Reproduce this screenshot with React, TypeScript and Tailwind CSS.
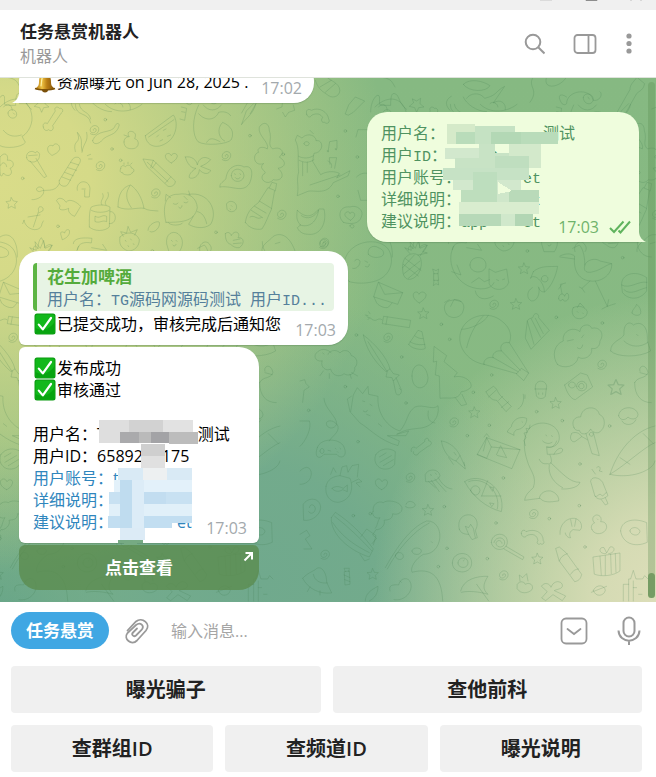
import React from 'react';

interface BubbleProps {
  className?: string;
  children: React.ReactNode;
}

interface MosaicProps {
  className: string;
  width: number;
  height: number;
  // x, y, width, height, fill
  cells: Array<[number, number, number, number, string]>;
  children?: React.ReactNode;
}

const keyboard = [
  ['曝光骗子', '查他前科'],
  ['查群组ID', '查频道ID', '曝光说明'],
];

const stars = [
  [370, 217], [648, 189], [672, 82], [523, 514], [767, 486], [384, 807], [218, 999], [712, 953],
];

const swirls = [
  [265, 291], [583, 192], [463, 545], [332, 711], [702, 820], [76, 942], [907, 372], [612, 1004], [72, 10],
];

const dots = [
  [169, 282], [424, 250], [449, 295], [305, 348], [136, 437], [318, 486], [520, 454], [174, 602],
  [568, 553], [502, 584], [610, 711], [433, 797], [160, 824], [748, 833], [441, 922], [562, 953],
  [415, 977], [838, 794], [929, 555], [787, 539], [710, 512], [769, 229], [907, 246], [968, 50], [682, 30],
  [575, 402], [588, 846], [855, 918], [211, 818], [26, 508], [840, 669],
];

const lowerShapes = [
  // ghost, pineapple, candy
  'M148 122C120 90 130 40 160 20C190-5 250-5 268 30C285 65 268 110 220 122C195 128 170 128 148 122M205 40c-5-20 15-30 30-20c18 6 20 20 10 26c-15 6-30 4-40-6M158 82c10 4 22-8 22-20c-2-8-12-10-16-2M195 60l8 4M196 76c6 4 12 2 12-6',
  'M308 84C305 55 320 40 340 38C362 38 368 60 362 82C356 104 340 116 325 115C312 112 308 98 308 84M310 70l45 35M315 52l48 36M312 98l48-38M325 112l36-30M308 80l35-38M330 38l-16-18l20 8l-4-26l16 20l10-24l4 24l22-10l-14 20l14 4l-28 6',
  'M402 98h12l2 20h-14zM402 98l-4-14l10 5l8-5l-2 14M402 118l-2 16l8-6l8 4l-2-14',
  // cat in a pool ring
  'M462 15C440 50 455 110 505 135C540 150 575 145 582 125M500 20l45 8l-12-18M510 72c0-30 48-30 48 0c0 28-48 28-48 0M568 84l18 10l34-10l6 40c-10 30-50 25-58 5zM590 116l6 3M608 116l6-2M455 92l28 10l-12-30M526 150c4 25 30 30 54 15M515 125l22-15l16 12l16-6',
  // pizza slice, cherries
  'M700 92C722 72 750 78 773 76C768 105 755 135 735 152C722 155 718 145 715 138M692 110C708 95 735 130 733 153M700 92l-8 20M724 114c0-14 20-14 20 0c0 12-20 12-20 0M697 140C678 150 680 175 695 180C712 180 720 160 717 140',
  'M776 172c0-14 14-18 18-6c4-14 14-10 12 3c-2 14-16 14-18 5c-4 8-12 6-12-2M786 158l-5-28l16-4M786 130l-10 14',
  // stork
  'M780 45C800 35 815 38 824 45C820 80 830 115 870 120C910 125 938 95 935 68L900 60C888 50 858 55 854 75C850 90 860 98 880 92C905 86 920 70 935 68M780 48l44 6M818 22l20-10c12 10 18 45 16 60M870 120l-24 22l-8-4M846 142l8 12M886 120l36 76l-16 8M922 196l4-20M922 196l24-8',
  // burger, envelope, heart
  'M965 132C962 100 1005 85 1040 110L1040 150C1020 178 985 178 968 155zM965 132c25 14 50-14 76-8M972 146c20 20 45-2 68-6',
  'M236 124L308 155L293 190L222 168zM236 124l18 36l54-5M222 168l8 18c8 10 28 18 36 12l10-12',
  'M358 186C340 176 336 162 343 155C350 150 356 156 357 160C362 150 374 152 378 160C380 172 366 180 358 186',
  // peach, firework
  'M440 220C425 200 436 178 456 178C475 170 498 185 490 208C486 230 455 238 440 220M452 196l10-20l22 6M434 184l14-8',
  'M252 226L332 238L328 260L248 248zM262 228l-4 22M246 236c-14-8-16 8-28 0c-8-8-14-4-18-10M196 222l8 2M206 212l4 6M204 236l4-5',
  // balloon
  'M552 370C500 362 465 310 485 265C505 220 570 210 605 240C635 262 635 290 628 305C600 300 600 325 605 330C580 325 575 350 580 350C560 345 548 362 552 370M552 370L650 398M580 350l74 42M605 330l56 58M628 305L686 396M650 398l14-16l22 14l-14 22zM500 320c10-40 25-70 50-95M485 265c25 0 70-20 80-42',
  // cake, strawberry, drop
  'M676 290L682 240C688 228 700 235 700 225C705 212 718 218 716 230L748 268L694 324zM682 240l20 70M694 234l28 55M706 232l24 46',
  'M820 200c14-8 36-4 42 12c0 18-22 26-36 18c-10-8-12-22-6-30M832 200l8-14l12 12M832 212l2 2M848 216l2 2M996 216c0-12 12-16 14-26c10 8 14 18 12 28c-6 8-20 6-26-2',
  // cloud face
  'M772 370C755 345 762 310 790 300C785 270 820 255 840 272C840 250 870 245 875 262C900 255 915 280 900 300C900 320 885 325 875 322C880 345 850 360 835 348C830 378 790 385 772 370M802 300l18-4M845 290l6-8M832 320c6 6 14 4 16-8',
  // bell, egg, fir tree
  'M326 310l28-42l12 4l10 50c-10 8-45 0-50-12M330 302c15 10 30 10 45 8M345 285c8 6 14 8 24 8M336 405c0-45 42-45 48 5c0 38-48 45-48-5',
  'M400 362L402 316L440 344L432 362L472 395L462 408C495 400 520 425 512 440C500 450 490 452 484 452C475 480 445 468 420 472L418 405L406 402L410 362zM466 470l18 24l16-4l-14-30',
  // umbrella closed, sheep
  'M190 282C198 320 220 360 258 392L270 384C262 350 225 308 190 282M204 302l56 88M262 390l-4 18l18 2l4 10l18-18l-18-4l-10-14M280 420l8 38c6 8 18 2 16-10l-6-6M288 410l16 36',
  'M66 360c-6 20 14 32 26 24c6 24 30 24 40 14c16 12 36-4 32-18c14-14 4-34-10-36c-6-22-30-16-34-8c-12-14-34-6-36 4M66 360c-22 4-28-20-12-28c12-12 32-6 40 4M70 390l-10 14M155 395l18 10M88 398v14M150 400l4 12M68 336l4 3',
  // fox
  'M152 512L160 462L172 440L188 458L204 436L206 460L234 466C230 520 265 560 300 570C325 540 320 515 345 498C370 488 400 510 414 494C420 530 395 560 355 562C325 566 315 566 290 580L326 570L318 584L262 584L298 600L294 614C240 600 205 560 180 546L150 512l-8-38l12-8M188 480l6 2M210 490l6 4M190 510c6 4 10 4 12-2M385 510c-4 24 4 34 20 36M200 520l10 4M235 548l10 8',
  // controller
  'M72 472c0 30 40 55 38 78c-10 20-35 10-30-6c8-10 28-2 34 12c4 20-20 30-26 44M52 620C60 590 120 590 132 618C145 650 120 655 110 640H72C55 660 42 645 52 620M60 630c0-10 12-10 12 0s-12 10-12 0M84 628l8 2M106 622l2 2M120 622l2 2M112 632l2 2',
  // gloves, bone, rocket squid
  'M228 640c15-20 42-20 58-8l-2 38c-10 18-40 18-50 6c-10-10-12-24-6-36M238 648l20-12M240 664l34-20M250 674l30-18M334 632c-4-12 8-18 14-10l26-20c-2-12 14-14 12-2c12 0 10 14-2 16l-28 20c-2 10-18 8-16-4',
  'M424 600C430 635 450 655 468 660L480 644C470 622 448 602 424 600M468 660l28 24l-4-20M480 644l14 30M446 650l14 20M462 634l6 8M376 700c8-18 40-18 44 4c-4 14-28 20-42 18zM386 722l20 18M394 718l24 34M404 714l34 38M414 708c10 20 24 34 42 36M392 700l2 4M406 696l3 4',
  // flashlight, acorn, camera
  'M558 452L580 436C592 442 590 450 600 462L634 496L618 512L590 478C576 478 566 468 558 452M566 468l22-20M596 478l12-12M604 500l22-18M706 438c0-24 32-22 34-2l-4 30c-6 10-22 8-26 0zM704 444h36M716 456v4M728 456v4M670 460c4 20-4 38-16 44M675 462v10',
  'M794 432L842 396L862 402L878 438L826 476C812 474 800 454 794 432M830 436c0-20 30-20 30 0c0 18-30 18-30 0M836 436c0-12 16-12 16 0c0 10-16 10-16 0M806 432c0-12 20-12 20 0s-20 12-20 0',
  // fish, milk box, dinosaur
  'M622 572C624 562 636 562 636 550C645 530 665 526 680 532C682 550 665 566 650 566C642 572 640 576 642 582zM666 542l2 2',
  'M532 640L560 590L660 626L636 682zM560 590l14 28l-14 34l-28-12M560 590l-10 40M574 618l86 8M590 640l12-26l18 36l-26-6zM552 588l8-10l8 10',
  'M690 560C720 532 778 548 778 590C778 610 762 622 740 618C755 622 765 615 770 600M740 618L742 640C765 640 790 640 788 625C780 615 766 630 762 640M750 642C760 665 752 672 742 668C730 670 722 665 718 655M690 560C670 580 668 620 682 660C690 690 712 705 700 740C690 750 676 760 674 778L720 772C735 790 765 780 776 780C778 770 770 755 752 750C735 748 720 756 718 772M752 665C790 700 810 725 840 724C835 742 800 745 785 744M748 672c-5 30 15 55 40 68M738 582l2 3M755 584l2 3M728 600c8 8 20 10 28 4M690 552l-2 12l-10-2l4 12l-10 2l6 14l-6 8l4 16',
  // tree axe, mushroom, rocket
  'M822 560c-10-20 4-34 20-32c4-34 50-36 56-8c20 8 18 38 6 48c-8 14-28 6-32-4c-8 18-30 20-34 4c-8 2-14-2-16-8M858 578l18 60l22 6l-18-70M814 578c10-8 26-2 30 8l18 10M814 580c-8 14 4 28 14 20l16-12M868 580c0-8 12-8 12 0s-12 8-12 0',
  'M956 524c2-30 52-32 58-4c0 18-24 16-30 8c-8 12-26 10-28-4M966 540c6 14 34 16 42-4M930 700C950 635 1000 570 1065 555M930 700C990 715 1060 690 1065 660M930 700c50-30 100-80 135-95M1030 578l30 30M960 650l30 20',
  // fish bowl, heart, jug
  'M78 736C82 715 98 706 120 704L150 712C165 750 145 782 112 784C88 782 74 762 78 736M96 742c14-10 24-4 34 0l12-10v20l-14-6c-10 8-26 6-32-4M120 704l6-26l14-4l4 20l12-20l20-4l-4 38M156 724l20-10l10 8l-18 4l12 12M92 700l8-20l8 14M245 746C226 738 222 722 230 716C238 710 244 718 246 722C252 712 266 716 262 728C260 738 250 744 245 746',
  // watermelon slice, popsicle
  'M494 722C540 690 620 740 604 812C560 800 520 770 494 722M506 722C550 704 604 750 592 804M545 765l18-46M545 765l58 0M512 748c2-18 26-18 28 0c-4 20-22 18-28 0M570 738l12 2l-4 10zM570 786l12 2l-6 8z',
  'M872 720C874 705 898 708 908 724L924 764C905 780 890 775 885 765zM885 765c6 8 12-12 20-2c6 6 8-8 14-8M904 776l12 16l8-4l-8-18M876 685l10 14M890 680c8-8 14 0 8 10l8 2',
  // ice cream cloud boat
  'M220 812C215 790 235 778 250 785C260 775 300 780 306 800C308 820 285 822 278 818C278 838 260 836 252 838C258 850 242 868 228 866l-10 16l12 10l-14 16M218 812c-2 16 12 22 22 18c-8 10-6 22-14 32M182 888l18-24l28 20l-8 28M94 830L106 814C160 850 195 890 220 924L208 948C150 930 90 880 94 830M98 845c30 45 70 70 110 90M104 826c40 30 80 70 112 104M180 940l14 20l14-6M318 790c4-14 24-10 28 2c-2 12-30 10-30 4',
  // whale rod
  'M256 980C290 920 330 860 380 840C410 838 425 870 418 900C410 930 390 940 370 940C345 955 330 980 336 994C390 980 425 1000 428 1080M262 984C290 930 340 870 388 846M336 930c0-12 28-12 28 0c0 14-28 14-28 0M286 944c0-14 24-12 24 2c0 14-24 12-24-2M394 902l3 3',
  // bulb, lollipop, eye
  'M478 865C470 835 490 818 512 822C535 830 535 855 526 868L532 890L516 896L506 880C492 880 482 876 478 865M506 880l-10-24l10 4l6-10l8 12l6 28M574 905c0-32 46-34 48-4c2 30-42 34-48 4M582 905c4-20 32-18 32 0c0 16-24 18-26 2c2-12 18-10 18 0M618 916l54 32l-4 8l-56-32M457 966c0-38 58-38 58 0c0 36-58 36-58 0M474 966c0-20 30-20 30 0c0 18-30 18-30 0M490 960l3-3',
  // arch, shrimp, duck, donut
  'M664 878c-2-10 10-14 14-6c24-10 52 0 52 28c6 4-2 14-8 8c-8 6-14-4-8-8c-2-18-16-24-34-16c-4 8-16 4-16-6M780 880c-2-30 20-50 44-48c20 4 26 26 16 36l-20-2c-10 4-14 14-8 24c-8 2-16-8-16-14M812 836l4 20M828 834l-4 22M876 866c-6-10 2-20 8-20c-10-10-6-22 6-24c12 0 16 12 12 20c14 0 18 8 18 18c-4 20-36 26-44 6M892 834l2 2M962 870C962 840 1000 828 1040 845L1042 904C1002 922 966 905 962 870M990 870c0-14 28-14 30 2c-4 16-28 12-30-2',
  // pencil, gift
  'M768 922L778 918L798 935L845 1000C842 1015 835 1020 824 1022L778 960zM778 960c4-12 12-18 24-22M812 1000c6-10 14-16 24-16M880 948L960 936L960 990C940 1005 905 1008 884 1000zM900 946l4 56M916 944v58M932 940l2 58M946 938l2 56M918 938c-24 2-22-22-6-18l8 16l10-18c16-4 18 18-4 20',
  // ufo, candy, star fish, castle
  'M8 1012C20 998 40 990 46 986C60 970 80 990 80 1024L95 1056C60 1060 25 1045 8 1012M40 1000c4 20 20 28 42 26M30 1038l-8 14M60 1050v12M134 992l14-2l2 40l-14 2zM132 1002l18 8M134 1016l16 6M136 992l-4-10h16l-2 10',
  'M196 1080c0-20 14-32 38-44c0 22-10 36-26 44M270 1050c-6-18 10-20 26-18c4-22 30-26 36-6c8 26-18 56-50 50M300 1020l4 4M482 1050C490 1015 530 1005 564 1006C548 1030 548 1046 564 1060C530 1050 500 1050 484 1054M530 1030l36 50M652 1030c6-12 22-8 24 0c14-8 26 4 20 16c-12 12-34 14-44-2zM660 1020l-2-18l10 8l12-12l4 22M725 1035c8-14 26-6 28 4c8-22 30-20 34-8c4 14-20 14-24 18l34 16l-10 14l-28-18l-22 18l-12-8l16-18zM880 1048c10-20 34-16 36 0c-4 18-30 22-36 0M874 1054l46-18M970 1080v-50h16v-16h6l8-26l8 26h20l6-10l10 10M986 1030v50M1000 1040h10M1016 1060h10M1000 1020v60',
  // hat, bear at the edge
  'M932 330C930 300 970 295 972 280C970 245 990 240 1000 252C1020 240 1045 250 1042 300L1052 330C1020 350 950 350 932 330M972 300c20 20 50 20 72 4M1010 280l4 4M1004 425c10-20 32-10 40-30c-6-30-30-20-24-4M1004 425c0 40 20 60 50 60M1020 395l22 6M1012 2c0 30 20 46 42 46M0 420l14-4l4 12l10 10l-16 10l-4 36M0 540h28c8 20-10 60-28 76M0 690c20-20 34-10 34 10c-4 30-30 30-34 30M10 790c10-20 48-24 52 8c0 26-30 44-50 40zM28 800c2-12 14-12 18 2c0 14-14 20-20 10M0 880l20-12l10 16l-14 10l20 30h-24',
];

const upperShapes = [
  'M0 90c40-40 90-30 96 30c2 30-20 55-30 58l10 18c-10 16-60 20-76 10M24 108c0-14 26-14 26 4c0 16-26 16-26-4M40 108l4 4M10 160c16 20 36 20 54 14M60 30c-10-16-10-30-60-30M130 150c-4-8 4-16 12-10l24-38c-6-10 6-16 12-8c10-2 14 8 6 14l-26 38c6 10-4 20-12 12c-8 6-16 0-16-8',
  'M226 82c0 40 40 20 46 56M238 82c4 26 30 20 34 44M278 190c0 16 20 10 26 2c20-24 44-12 54-48c-4-10-12-2-14 6c-10 20-54 6-66 40M316 82c30 30 80 24 110 0M372 195c0-16 14-16 16-16c-10-12 2-20 12-14c10 6 6 14 4 20c16 4 14 28-4 30c-18 2-28-6-28-20M384 178l-12-4',
  'M436 176L520 114C534 130 534 180 496 200C466 218 438 204 436 176M446 180L522 128M470 180l6-6M490 160l8-4M480 192l8-4M502 178l10-4M544 90l16 4l-6 36l-14-4M545 104l10 2',
  'M596 84c-20 40-20 90-2 110c20 14 90 8 100-6c10-24 0-40-26-52c-20 20-10 50 6 56M596 110c20 24 50 20 60-4c14-4 30 0 36 10M610 84c14 20 40 20 54 0M620 196c10-18 24-10 40-2M725 142l14-40l22-22M725 142c14-20 34-30 42-60',
  'M145 225c-8-16 6-24 14-18c4-12 22-6 20 10c-4 10-14 14-22 18zM80 242c-4-18 18-24 26-14c4-10 16 0 12 10c0 14-18 20-26 16c-6 0-12-6-12-12M90 252l42 50l8-4l-32-54M86 236l26-2M0 240c16-20 26-4 22 10c20-4 24 20 8 24c14 18-8 30-20 14c-8 20-12 10-10-48M2 265c4-12 16-10 18 4',
  'M178 310L218 246C228 236 246 240 240 256L204 322C196 334 172 326 178 310M186 300l26 10M194 286l26 10M204 272l26 8M212 256l24 8M178 320c-14 30-40 14-60 24c-20-4 0-24 12-8c8 20-20 34-34 32M226 224c-10-40 20-20 6-58c20 24 8 30 14 56M246 226c4-30 20-30 14-60M262 236l10-4M266 246h10',
  'M362 275c0-12 10-10 14-6c8-8 18-4 18 4c10 2 10 12 2 14c0 10-30 8-28 0c-10 0-8-8-6-12M372 258v4M384 256v4M392 262l4-4M232 340c-6-30 34-36 38-6l-2 26h-14v-20M246 336h10M430 246l30 4l66 62c0 14-12 18-22 16l-62-58zM460 250l-8 22M468 258l-12 16M512 300l-16 18M442 256l62 58',
  'M514 258c-20-10-22-26-12-28c6-2 10 2 12 6c4-10 18-8 18 2c-2 10-10 14-18 20M556 240c20-4 34 10 36 24c4-20 20-30 40-16c-8 10-20 16-30 20l30 12c-4 12-20 14-34-2c0 20-20 30-30 24c-2-10 8-20 20-28c-16 0-26-14-32-34M660 330c-4-12 14-16 18-26c4-36 36-46 54-34c30-8 26 30 16 50c-20 30-54 4-88 10M694 296c0-26 36-26 38 0c-2 22-36 24-38 0M704 290l2 3M720 290l2 3M706 302c4 6 12 4 14 0',
  'M790 260c-30 10-34-30-14-34c-8-14 12-20 26-10c8-20-30-40-24-66c14-20 30-10 30 10c10 30-8 40 10 56c24-10 40 10 20 24c22 14 20 30-4 34c24 20 10 40-14 34c-16 20-44 0-30-16c20-8-20-14 0-32',
  'M892 355c6-30-4-40 4-70c-4-40 4-70-10-96l6-14l14 8c20-20 44-4 42 8c24-4 24 36-6 38l-4 24l24 40c16-10 40-12 56-4l-8 14l40-22l-6 16l-44 20c-20 40-60 20-76 26zM896 238c14 8 34 6 44-2M898 250c14 8 30 8 44-2M912 200c0-8 14-8 16 0c-2 8-14 8-16 0M940 170l-10-10M930 324l90-30M908 256v40M922 256v30M985 220l4-26l22-4v24M986 222c-8-4-6 4 0 2M1010 216c-8-4-6 4 0 2M990 262l-2-20h22l-6 32M984 252c8 4 14 10 10 20',
  'M268 450c0-30 0-50 6-60c18-8 42-8 56 0l-2 60c-14 14-46 14-60 0M274 400c14 8 40 8 54 0M330 404c20-4 24 38-2 36M286 418c14 10 20-8 34 0v16c-14-6-20 6-34 0zM306 384c-10-14 10-18 2-34M318 384c-10-14 14-18 6-38M354 390c0-40 14-60 38-66c20 14 34 38 40 70c-20-4-50 10-78-4M432 394c14 8 24 6 42 8M390 326c-14 20-14 40 4 66',
  'M498 436C486 390 496 350 534 352C570 345 590 365 592 392C584 436 540 436 498 436M512 362l-14-10l-2 20M570 354l-4-12M520 380c8 4 10 2 14-2M552 376c6 4 10 0 12-2M536 390c4 8 10 2 10-4M566 352c60-10 90 50 66 90c-20 16-50 10-66 0l14-24M620 440c-4-20-14-34-28-36M504 436c6 12 40 10 44 2M552 358l10 10',
  'M736 436c6-40 30-50 40-60l28-44l20 8l-10 58c-10 20-16 40-28 58c-20 4-40-4-50-20M764 388l34 20M754 400l34 22M808 332l8-16l14 4l-4 22M778 372l36 22M750 420c14-8 20 10 34 2M170 370c4-10 20-8 28 6c10-14 34 0 44 12l-18 30c-16-6-20-16-18-24c-16 8-34 6-26-6zM72 430c4 30 50 40 54 10l4-8M72 430l-4 10M84 420l36-6M100 450l16-48c-6-20 20-14 12 0l-12 6M34 362l6 10l12 2l-8 8l2 12l-12-6l-10 6l2-12l-8-8l12-2z',
  'M892 400c20 20 40 24 60 0l6-4h14c10 40-10 80-46 76c-20 0-30-10-34-20l10-8c-10-10-14-20-10-44M900 444c30 10 50-10 56-44M904 416c20 14 40 4 52-16M1030 436c-20-20-10-50 20-46c20-8 44 10 34 30c-6 20-30 24-54 16M1052 430c-14-8-22-16-14-24c8-4 12 0 12 4c4-8 16-4 14 6c-2 6-8 10-12 14M1050 446c0-6 14-4 12 4c-4 6-12 2-12-4',
  'M0 480c30-20 54 10 52 60M100 520c0-20 10-14 14-4c0-20 6-30 10-34c8 14 10 20 10 30c8-10 20-12 22-6c-8 20-20 24-20 30M182 470c0-8 6-6 12-2c2-10 10-12 14-8c4 14-10 24-20 28zM220 500c0-14 20-20 56-16l-2 14c-20-4-40 0-42 20M360 480c20-20 50-14 58 8c0 20-14 34-34 34c-20-8-28-20-24-42M370 478l-8-14l18 4l4-20l8 18l20-8l-8 16M376 490l2 3M392 486l2 3M384 506l2 3M400 500l2 3M444 460c0-20 30-30 34-24c4 14-14 34-28 28',
  'M500 500c-4-30 18-40 34-30c20 16 14 40 4 54h-30zM514 490l3 3M528 490l3 3M518 504c4 6 10 2 10-2M600 524c-8-24 20-40 30-20c6 8 4 16 0 20M676 470c8-8 16-2 18 6c10-20 30-8 20 6c20-2 20 20 4 30c-10 2-20-4-26-10c-14-4-16-20-16-32M700 490l20-4M700 500l24-2M786 524c-4-20 20-30 34-46c24-14 50 0 66 46M826 500l14-4M680 380c8-14 30-6 30 10c0 14-20 20-28 8zM694 386l2 2M690 396l2 2',
  'M946 10c10 30 24 34 40 46c14 10 40 0 32-24c-10-20-30-20-46-40M960 30l34-20M976 46l30-26M1036 110l10-26l20-24l28 12l-34 34l-14 8zM920 112c-4-14 6-18 14-12c24-12 50 6 52 26c6 8-4 18-12 10c-10 2-12-8-6-14c-6-12-18-14-32-8c-6 10-14 6-16-2M830 96l16-6l2-20M880 84l4 16l-18 6l-10 14l-8-14M1068 180l6-22h36M1070 300c10-10 20-14 40-10M1074 340l8 30h28',
  'M1112 105c0-30 14-50 22-50c10 0 0 26 8 30h30c0-40 8-40 20-30c8 14 10 30 28 42M1136 90c8-14 24-10 26 10M1238 66l12 6l12-8l-2 16l12 10l-16 2l-6 14l-6-14l-16-4l12-10zM1350 100c-20-20-8-36 4-42M1390 22c20-20 60-10 80 4c-10 20-64 20-80-4M1390 60c8 20 40 44 70 44M1400 64c10-16 40-20 54 0c40-10 30-20 60-36l-34 50c20-14 40 0 36 20M1470 80c8-10 24 0 24 10M1600 0c-20 30 20 36-10 76M1640 0c-14 40 40 34 60 0M1700 60c-20-14-30-4-14 20c6 4 10 4 14 0c0-40 70-50 80-10c20 4 30-20 20-26M1750 62c0-16 30-16 30 6c-4 20-30 14-30-6M1764 60l4 6M1850 108l40-70c0-20 20-30 20-38l24 20c-4 20-14 20-24 30l-34 60',
];

const ChatWallpaper: React.FC = () => (
  <svg className="absolute inset-0 w-full h-full" aria-hidden="true">
    <defs>
      <g id="star"><path d="M0-16l5 11l12 1l-9 8l3 12l-11-6l-11 6l3-12l-9-8l12-1z" /></g>
      <g id="swirl"><path d="M-13 10C5 22 20-2 8-12C-4-20-18-6-12 4C-6 12 8 4 4-4C0-8-6-4-4 0" /></g>
      <g id="tile" fill="none" stroke="#3f7b50" strokeOpacity="0.24" strokeWidth="2.6" strokeLinejoin="round" strokeLinecap="round">
        <g transform="translate(300 163) scale(0.3333)">
          {lowerShapes.map((d, i) => <path key={i} d={d} />)}
          {stars.map(([x, y]) => <use key={`${x}-${y}`} href="#star" x={x} y={y} />)}
          <use href="#star" transform="translate(948 438) scale(1.4)" />
          {swirls.map(([x, y]) => <use key={`${x}-${y}`} href="#swirl" x={x} y={y} />)}
          {dots.map(([x, y]) => <circle key={`${x}-${y}`} cx={x} cy={y} r="4" />)}
        </g>
        <g transform="translate(0 -1) scale(0.3333)">
          {upperShapes.map((d, i) => <path key={i} d={d} />)}
          {[[302, 268], [468, 350], [680, 238], [846, 414], [974, 498], [284, 160]].map(([x, y]) => (
            <use key={x} href="#swirl" x={x} y={y} />
          ))}
          {[[68, 304], [174, 448], [336, 216], [362, 250], [750, 176], [850, 232], [1036, 162], [1014, 358], [1072, 240], [648, 466], [316, 128]].map(([x, y]) => (
            <circle key={x} cx={x} cy={y} r="4" />
          ))}
        </g>
      </g>
    </defs>
    <use href="#tile" x="-375" />
    <use href="#tile" />
    <use href="#tile" x="375" />
  </svg>
);

const CheckEmoji: React.FC = () => (
  <svg className="w-[22px] h-[22px] shrink-0 self-center mx-px" viewBox="0 0 22 22" role="img" aria-label="✅">
    <rect x="0.5" y="0.5" width="21" height="21" rx="2.5" fill="#0a9a10" />
    <rect x="1.5" y="1.5" width="19" height="19" rx="2" fill="#12b81b" />
    <path d="M1.5 15V19a1.5 1.5 0 0 0 1.5 1.5h16a1.5 1.5 0 0 0 1.5-1.5V9C16 16 9 19 1.5 15z" fill="#08a410" />
    <path d="M4.8 11.6L8.8 16.4L17 5" fill="none" stroke="#fff" strokeWidth="2.2" strokeLinecap="round" strokeLinejoin="round" />
  </svg>
);

const BellEmoji: React.FC = () => (
  <svg className="w-[22px] h-[22px] shrink-0 self-center mx-px" viewBox="0 0 22 22" role="img" aria-label="🔔">
    <defs>
      <linearGradient id="brass" x1="0" x2="1" y1="0" y2="0">
        <stop offset="0" stopColor="#a86c0c" />
        <stop offset="0.35" stopColor="#eec243" />
        <stop offset="0.6" stopColor="#b97d14" />
        <stop offset="1" stopColor="#7c500a" />
      </linearGradient>
    </defs>
    <circle cx="11" cy="2.5" r="1.6" fill="none" stroke="#a9730f" />
    <ellipse cx="11" cy="19" rx="3" ry="2.4" fill="#7a4f0a" />
    <path d="M11 3c5 0 6 4 6 8c0 4 1.5 5 4 6.5c-1 2-19 2-20 0C3.5 16 5 15 5 11c0-4 1-8 6-8z" fill="url(#brass)" />
    <path d="M1 17.5c4 1.7 16 1.7 20 0" fill="none" stroke="#7d5209" strokeWidth="1.4" />
    <path d="M8.5 6c-1 2-1 6-1.5 9" fill="none" stroke="#fff1a6" strokeWidth="1.2" strokeLinecap="round" />
  </svg>
);

const Mosaic: React.FC<MosaicProps> = ({ className, width, height, cells, children }) => (
  <svg className={`absolute ${className}`} width={width} height={height} shapeRendering="crispEdges" aria-hidden="true">
    {cells.map(([x, y, w, h, fill]) => (
      <rect key={`${x}-${y}-${w}`} x={x} y={y} width={w} height={h} fill={fill} />
    ))}
    {children}
  </svg>
);

const Bubble: React.FC<BubbleProps> = ({ className = '', children }) => (
  <div className={`relative shrink-0 bg-white px-[14px] py-[10px] text-base/[22px] text-black shadow-[0_1px_1px_rgba(60,100,60,0.25)] ${className}`}>
    {children}
  </div>
);

const Line: React.FC<{ children: React.ReactNode }> = ({ children }) => (
  <p className="h-[22px] flex items-baseline whitespace-nowrap">{children}</p>
);

const Time: React.FC<{ className?: string; children: React.ReactNode }> = ({ className = 'right-3 text-[#a3a9ad]', children }) => (
  <time className={`absolute bottom-1 flex items-center gap-[10px] ${className}`}>{children}</time>
);

const Mono: React.FC<{ children: string }> = ({ children }) => (
  <span className="font-['Liberation_Mono','Noto_Sans_CJK_SC',monospace] text-[15px] whitespace-pre">{children}</span>
);

const App: React.FC = () => {
  return (
    <div className="h-screen flex flex-col overflow-hidden bg-white font-['Open_Sans','Noto_Sans_CJK_SC',sans-serif]">
      <div className="h-[10px] shrink-0 bg-[#f0f0f0] flex justify-end">
        <svg width="120" height="10" stroke="#8d8d8d" fill="none" aria-hidden="true">
          <path d="M4 0h12" stroke="#c5c5c5" />
          <path d="M50 -2h11v2.5h-11z" />
          <path d="M95 0.5l2-2M105 0.5l-2-2" />
        </svg>
      </div>

      <header className="h-[68px] shrink-0 flex items-center justify-between pl-5 pr-[23px] border-b border-[#dfe3dc]">
        <div>
          <h1 className="text-[17px]/[24px] font-bold text-[#222]">任务悬赏机器人</h1>
          <p className="text-base/[24px] text-[#999]">机器人</p>
        </div>
        <div className="flex items-center gap-7 text-[#999]">
          <button aria-label="搜索">
            <svg width="22" height="22" fill="none" stroke="currentColor" strokeWidth="2">
              <circle cx="10" cy="9" r="7.3" />
              <path d="M15.2 14.2L21.5 20.5" />
            </svg>
          </button>
          <button aria-label="侧边栏">
            <svg width="24" height="22" fill="none" stroke="currentColor" strokeWidth="1.8">
              <rect x="1.5" y="2" width="21" height="18" rx="3" />
              <path d="M15.5 2v18" />
            </svg>
          </button>
          <button aria-label="更多">
            <svg width="8" height="22" fill="currentColor">
              <circle cx="4" cy="3" r="2.6" />
              <circle cx="4" cy="10.5" r="2.6" />
              <circle cx="4" cy="18" r="2.6" />
            </svg>
          </button>
        </div>
      </header>

      <main className="relative flex-1 min-h-0 overflow-hidden flex flex-col justify-end pl-[19px] pr-[17px] pb-3 bg-[radial-gradient(circle_at_0%_20%,#d9dc89_0px,#d5da88_90px,rgba(213,218,136,0)_390px),radial-gradient(circle_at_104%_100%,#e0dfbb_0px,rgba(220,222,184,0.9)_90px,rgba(214,220,180,0)_310px),radial-gradient(circle_at_40%_96%,#70a98d_0px,rgba(112,169,141,0.9)_110px,rgba(112,169,141,0)_290px),radial-gradient(circle_at_0%_105%,#64a388_0px,rgba(100,163,136,0)_200px),linear-gradient(#86b982,#89ba84)]">
        <ChatWallpaper />

        <Bubble className="w-[295px] rounded-[20px] rounded-bl-none">
          <svg className="absolute bottom-0 -left-[7px]" width="7" height="10" fill="#fff" aria-hidden="true">
            <path d="M7 0V10H0C4 8 6.5 5 7 0z" />
          </svg>
          <Line><BellEmoji />资源曝光 on Jun 28, 2025 .</Line>
          <Time>17:02</Time>
        </Bubble>

        <Bubble className="mt-[9px] w-[272px] self-end rounded-[20px] rounded-br-none !bg-[#effddd] !text-[#4f9361]">
          <svg className="absolute bottom-0 -right-[7px]" width="7" height="10" fill="#effddd" aria-hidden="true">
            <path d="M0 0V10H7C3 8 0.5 5 0 0z" />
          </svg>
          <Line>用户名：<span className="ml-[98px]">测试</span></Line>
          <Line>用户<Mono>ID</Mono>：<span className="ml-6"><Mono>892</Mono></span></Line>
          <Line>用户账号：<span className="ml-[62px]"><Mono>et</Mono></span></Line>
          <Line>详细说明：<Mono>t</Mono><span className="ml-[62px]"><Mono>t</Mono></span></Line>
          <Line>建议说明：<Mono>app</Mono><span className="ml-[35px]"><Mono>et</Mono></span></Line>
          <Mosaic
            className="left-[76px] top-[10px]"
            width={116}
            height={114}
            cells={[
              [4, 2, 28, 20, '#d5eac9'],
              [13, 10, 102, 12, '#b9dcba'],
              [32, 4, 40, 18, '#c5e2c3'],
              [48, 10, 30, 12, '#b3d8b5'],
              [2, 26, 40, 11, '#d2e8cd'],
              [12, 36, 72, 10, '#c8e3c5'],
              [36, 22, 16, 14, '#c8e3c5'],
              [40, 31, 28, 6, '#c8e3c5'],
              [66, 22, 32, 24, '#d3e9cb'],
              [52, 34, 34, 12, '#bfdebf'],
              [0, 46, 86, 12, '#c6e2c5'],
              [10, 58, 68, 10, '#d2e8cd'],
              [30, 50, 24, 18, '#bddebe'],
              [18, 68, 52, 12, '#bedebd'],
              [54, 68, 22, 12, '#cfe7ca'],
              [66, 68, 30, 12, '#b9dab9'],
              [16, 80, 80, 12, '#d9edcf'],
              [16, 92, 42, 12, '#b7d9b8'],
              [58, 92, 14, 12, '#d0e8cb'],
              [72, 92, 18, 12, '#b2d6b4'],
            ]}
          >
            <path d="M55 60l14 9l-14 3z" fill="#effddd" />
          </Mosaic>
          <Time className="right-2 text-[#6fb36b]">
            17:03
            <svg width="22" height="14" fill="none" stroke="#5fb35d" strokeWidth="2" aria-label="已读">
              <path d="M1 8L5 12L14.5 1.5M9.5 10.5L11.5 12.5L21 1.5" />
            </svg>
          </Time>
        </Bubble>

        <Bubble className="mt-[9px] w-[329px] rounded-[20px] rounded-bl-md pt-3">
          <blockquote className="h-12 mb-[2px] rounded-[4px] border-l-4 border-[#5db544] bg-[#e7f4e4] pl-[10px] pt-[3px]">
            <p className="text-[17px]/[22px] font-bold text-[#55ab3c]">花生加啤酒</p>
            <div className="text-[#55809b]">
              <Line>用户名：<Mono>TG</Mono>源码网源码测试<Mono> </Mono>用户<Mono>ID...</Mono></Line>
            </div>
          </blockquote>
          <Line><CheckEmoji />已提交成功，审核完成后通知您</Line>
          <Time>17:03</Time>
        </Bubble>

        <Bubble className="mt-[2px] w-[240px] rounded-md rounded-tr-[20px]">
          <Line><CheckEmoji />发布成功</Line>
          <Line><CheckEmoji />审核通过</Line>
          <br />
          <Line>用户名：T<span className="ml-[92px]">测试</span></Line>
          <Line>用户ID：65892<span className="ml-[19px]">175</span></Line>
          <div className="text-[#2f86bd]">
            <Line>用户账号：t</Line>
            <Line>详细说明：</Line>
            <Line>建议说明：<span className="ml-16">et</span></Line>
          </div>
          <Mosaic
            className="left-20 top-[73px]"
            width={99}
            height={125}
            cells={[
              [0, 0, 30, 23, '#dedede'],
              [30, 0, 34, 12, '#d2d2d2'],
              [64, 0, 30, 14, '#e2e2e2'],
              [21, 12, 19, 11, '#aaaaac'],
              [40, 12, 12, 11, '#bababa'],
              [52, 12, 18, 11, '#a3a3a6'],
              [70, 12, 29, 12, '#bcbcbc'],
              [42, 24, 24, 12, '#cfcfcf'],
              [42, 36, 24, 12, '#e0e0e0'],
              [19, 48, 74, 12, '#d9eaf5'],
              [44, 48, 24, 12, '#edf0f1'],
              [15, 60, 78, 12, '#e3f1fa'],
              [10, 72, 83, 12, '#c8e1f2'],
              [10, 84, 83, 12, '#e1f0f9'],
              [9, 96, 64, 12, '#c2def1'],
              [73, 96, 20, 7, '#c2def1'],
              [21, 60, 12, 50, '#bfdcef'],
              [33, 60, 12, 50, '#dcecf7'],
              [45, 72, 22, 12, '#c2ddf0'],
              [21, 108, 25, 12, '#dcebf6'],
            ]}
          >
            <path d="M19 120h25v3h-6v2h-13v-2h-6z" fill="#76aa83" />
          </Mosaic>
          <Time>17:03</Time>
        </Bubble>
        <button className="relative shrink-0 mt-[2px] w-[240px] h-[45px] rounded-md rounded-b-[20px] bg-[#5b8c4f]/80 text-[17px] font-semibold text-white">
          点击查看
          <svg className="absolute top-[6px] right-[5px]" width="11" height="11" fill="none" stroke="#fff" strokeWidth="2" aria-hidden="true">
            <path d="M2.5 2H9V8.5M9 2L1.5 9.5" />
          </svg>
        </button>

        <div className="absolute right-px top-1 bottom-1 w-[7px] rounded-full bg-[#5b8c4f]/30 flex flex-col justify-end">
          <div className="h-[25px] rounded-full bg-[#5b8c4f]/70" />
        </div>
      </main>

      <footer className="shrink-0 pl-[11px] pb-[5px] pr-[14px]">
        <form className="h-[57px] mb-[7px] flex items-center">
          <button type="button" className="h-[37px] px-[15px] rounded-full bg-[#40a7e3] text-[17px] font-semibold text-white">任务悬赏</button>
          <button type="button" aria-label="附件" className="ml-[15px] text-[#999]">
            <svg width="26" height="28" viewBox="0 0 26 28" fill="none" stroke="currentColor" strokeWidth="1.8" strokeLinecap="round">
              <path d="M3.5 13.5L12 4.5C18-0.5 27.5 7 22 13.5L13 23.5C7.500 29-1 22 3.500 16L12 8C16.500 4.500 21 9 17.500 13L12 18.5C9.500 20.5 7 17.5 9 15.5L13 11.5" />
            </svg>
          </button>
          <input
            aria-label="输入消息"
            placeholder="输入消息..."
            className="ml-[21px] flex-1 min-w-0 text-base outline-none placeholder:text-[#a5a5a5]"
          />
          <button type="button" aria-label="机器人键盘" className="text-[#999]">
            <svg width="28" height="28" fill="none" stroke="currentColor" strokeWidth="1.8">
              <rect x="1.5" y="1.5" width="25" height="25" rx="4.5" />
              <path d="M7.5 12l6.5 5l6.5-5" strokeLinecap="round" />
            </svg>
          </button>
          <button type="button" aria-label="语音" className="mx-px pl-7 text-[#999]">
            <svg width="24" height="30" fill="none" stroke="currentColor" strokeWidth="2">
              <rect x="6.5" y="1.5" width="11" height="19" rx="5.5" />
              <path d="M1.5 14.5C2 28 22 28 22.5 14.5M12 24.5V29" />
            </svg>
          </button>
        </form>
        <div className="flex flex-col gap-3">
          {keyboard.map((row) => (
            <div key={row[0]} className="flex gap-3">
              {row.map((label) => (
                <button key={label} className="flex-1 h-[47px] rounded-[4px] bg-[#f0f0f0] text-xl font-semibold text-[#222]">
                  {label}
                </button>
              ))}
            </div>
          ))}
        </div>
      </footer>
    </div>
  );
};

export default App;
